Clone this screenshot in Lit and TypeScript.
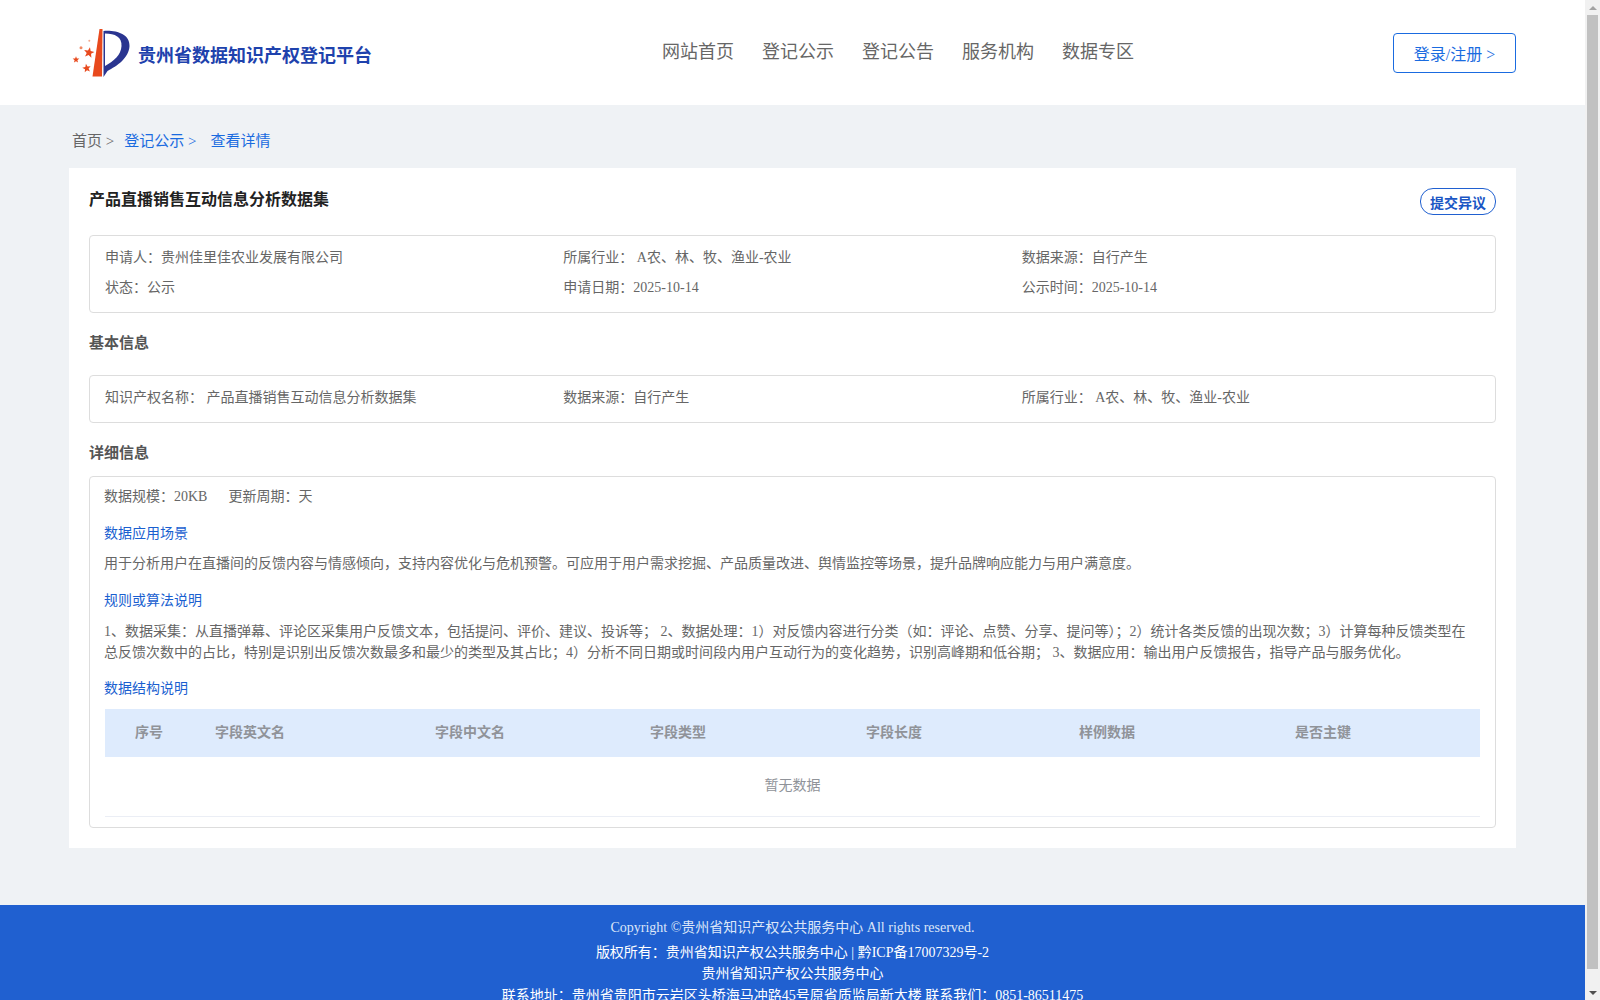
// Detail page of the Guizhou data IP registration platform.
import { LitElement, html, css, svg } from 'lit';
import { customElement } from 'lit/decorators.js';

const NAV = ['网站首页', '登记公示', '登记公告', '服务机构', '数据专区'];
const COLUMNS = ['序号', '字段英文名', '字段中文名', '字段类型', '字段长度', '样例数据', '是否主键'];

function star(cx: number, cy: number, r: number, rot = 0) {
  const pts: string[] = [];
  for (let i = 0; i < 10; i++) {
    const rad = i % 2 ? r * 0.42 : r;
    const a = ((-90 + rot + i * 36) * Math.PI) / 180;
    pts.push(`${(cx + rad * Math.cos(a)).toFixed(2)},${(cy + rad * Math.sin(a)).toFixed(2)}`);
  }
  return svg`<polygon points=${pts.join(' ')} fill="#e8491d" />`;
}

@customElement('app-root')
export class AppRoot extends LitElement {
  static override styles = css`
    :host {
      display: flex;
      height: 100vh;
      font-family: 'Liberation Serif', 'Noto Sans CJK SC', serif;
      font-size: 14px;
      color: #666;
    }
    .page {
      flex: 1;
      min-width: 0;
      height: 100vh;
      overflow: hidden;
      background: #eff2f5;
    }

    /* the window's own scrollbar, headless chrome does not paint one */
    .scrollbar {
      width: 15px;
      flex: none;
      background: #f1f1f1;
      display: flex;
      flex-direction: column;
    }
    .arrow {
      height: 15px;
      flex: none;
      display: flex;
      align-items: center;
      justify-content: center;
    }
    .arrow svg {
      width: 8px;
      height: 4px;
    }
    .thumb {
      height: 954px;
      flex: none;
      margin: 0 2px;
      background: #c1c1c1;
    }
    .rest {
      flex: 1;
    }

    header {
      height: 105px;
      background: #fff;
      display: flex;
      align-items: center;
      padding: 0 69px 0 70px;
    }
    .brand {
      width: 592px;
      display: flex;
      align-items: center;
      gap: 4px;
    }
    .brand svg {
      width: 64px;
      height: 56px;
      flex: none;
    }
    .brand b {
      font-size: 18px;
      color: #1e42ad;
      margin-top: 2px;
    }
    nav {
      flex: 1;
      display: flex;
      gap: 28px;
      font-size: 18px;
      line-height: 24px;
      color: #666;
      margin-top: -2px;
    }
    .login {
      width: 123px;
      height: 40px;
      box-sizing: border-box;
      border: 1px solid #1a6be0;
      border-radius: 4px;
      color: #1a6be0;
      font-size: 16px;
      display: flex;
      align-items: center;
      justify-content: center;
      margin-top: 1px;
    }

    .crumbs {
      padding: 25px 0 16px 72px;
      font-size: 15px;
      line-height: 22px;
    }
    .crumbs a {
      color: #1a6be0;
    }
    .crumbs span {
      margin-right: 10px;
    }
    .crumbs a.cur {
      margin-left: 4px;
    }

    .card {
      margin: 0 69px;
      background: #fff;
      padding: 20px;
    }
    .title-row {
      display: flex;
      justify-content: space-between;
      align-items: flex-start;
      height: 27px;
    }
    h1 {
      margin: 0;
      font-size: 16px;
      line-height: 24px;
      color: #222;
    }
    .object {
      width: 76px;
      height: 27px;
      box-sizing: border-box;
      border: 1px solid #2060d0;
      border-radius: 13px;
      color: #1a56c4;
      font-weight: bold;
      font-size: 14px;
      display: flex;
      align-items: center;
      justify-content: center;
    }
    .box {
      border: 1px solid #ddd;
      border-radius: 4px;
      padding: 0 15px;
    }
    .cols {
      display: grid;
      grid-template-columns: repeat(3, 1fr);
    }
    .summary {
      margin-top: 20px;
      padding-top: 7px;
      padding-bottom: 9px;
      line-height: 30px;
    }
    h2 {
      margin: 0;
      font-size: 15px;
      line-height: 22px;
      color: #555;
    }
    .h-basic {
      margin-top: 19px;
      margin-bottom: 21px;
    }
    .basic {
      padding-top: 11px;
      padding-bottom: 13px;
      line-height: 22px;
    }
    .h-detail {
      margin-top: 19px;
      margin-bottom: 12px;
    }
    .detail {
      padding-top: 9px;
      padding-bottom: 10px;
    }
    .line {
      line-height: 22px;
      margin-left: -1px;
    }
    .line span + span {
      margin-left: 21px;
    }
    h3 {
      margin: 0 0 0 -1px;
      font-size: 14px;
      font-weight: normal;
      line-height: 22px;
      color: #1a5fd0;
    }
    .scene {
      margin-top: 15px;
    }
    .rule {
      margin-top: 16px;
    }
    .struct {
      margin-top: 15px;
    }
    p {
      margin: 9px 1px 0 -1px;
      line-height: 21px;
    }
    .scene + p {
      margin-top: 8px;
    }
    .table {
      margin-top: 9px;
      color: #909399;
    }
    .thead {
      height: 48px;
      background: #deebfd;
      display: grid;
      grid-template-columns: 90px 220px 215px 216px 213px 216px 1fr;
      align-items: center;
      font-weight: bold;
    }
    .thead div {
      padding-left: 20px;
      margin-top: -5px;
    }
    .thead div:first-child {
      padding-left: 30px;
    }
    .empty {
      height: 59px;
      border-bottom: 1px solid #ebeef5;
      display: flex;
      align-items: center;
      justify-content: center;
    }
    .empty span {
      margin-top: -5px;
    }

    footer {
      margin-top: 57px;
      background: #2060d0;
      color: #fff;
      text-align: center;
      padding: 12px 0 11px;
      line-height: 21px;
    }
    .copy {
      color: #dce6f8;
      margin-bottom: 4px;
    }
    .contact {
      margin-top: 1px;
    }
  `;

  private _logo() {
    return svg`<svg viewBox="0 0 64 56">
      <path d="M29.5 4H32.5L32 51.5H22.5Z" fill="#e8491d" />
      <path d="M33.5 6C46 5 60 9 59.5 21C59 33 47 41 37.5 46L33.5 52Z" fill="#2a3590" />
      <path d="M35 8.5C45 8.5 52 12 51.5 21C51 30 44 36 35 41Z" fill="#fff" />
      ${star(19, 27.7, 5.5, 10)}
      ${star(6, 34.7, 3.5)}
      ${star(16.7, 43.3, 4.5, -10)}
      <circle cx="11" cy="22.7" r="1.5" fill="#f08a66" />
      <circle cx="19.3" cy="15.7" r="1" fill="#f4a88c" />
    </svg>`;
  }

  protected override render() {
    return html`
      <div class="page">
        <header>
          <div class="brand">${this._logo()}<b>贵州省数据知识产权登记平台</b></div>
          <nav>${NAV.map((n) => html`<span>${n}</span>`)}</nav>
          <div class="login">登录/注册 &gt;</div>
        </header>

        <div class="crumbs">
          <span>首页 &gt;</span><a><span>登记公示 &gt;</span></a><a class="cur">查看详情</a>
        </div>

        <div class="card">
          <div class="title-row">
            <h1>产品直播销售互动信息分析数据集</h1>
            <div class="object">提交异议</div>
          </div>

          <div class="box cols summary">
            <div>申请人：贵州佳里佳农业发展有限公司</div>
            <div>所属行业： A农、林、牧、渔业-农业</div>
            <div>数据来源：自行产生</div>
            <div>状态：公示</div>
            <div>申请日期：2025-10-14</div>
            <div>公示时间：2025-10-14</div>
          </div>

          <h2 class="h-basic">基本信息</h2>
          <div class="box cols basic">
            <div>知识产权名称： 产品直播销售互动信息分析数据集</div>
            <div>数据来源：自行产生</div>
            <div>所属行业： A农、林、牧、渔业-农业</div>
          </div>

          <h2 class="h-detail">详细信息</h2>
          <div class="box detail">
            <div class="line"><span>数据规模：20KB</span><span>更新周期：天</span></div>
            <h3 class="scene">数据应用场景</h3>
            <p>用于分析用户在直播间的反馈内容与情感倾向，支持内容优化与危机预警。可应用于用户需求挖掘、产品质量改进、舆情监控等场景，提升品牌响应能力与用户满意度。</p>
            <h3 class="rule">规则或算法说明</h3>
            <p>1、数据采集：从直播弹幕、评论区采集用户反馈文本，包括提问、评价、建议、投诉等； 2、数据处理：1）对反馈内容进行分类（如：评论、点赞、分享、提问等）；2）统计各类反馈的出现次数；3）计算每种反馈类型在总反馈次数中的占比，特别是识别出反馈次数最多和最少的类型及其占比；4）分析不同日期或时间段内用户互动行为的变化趋势，识别高峰期和低谷期； 3、数据应用：输出用户反馈报告，指导产品与服务优化。</p>
            <h3 class="struct">数据结构说明</h3>
            <div class="table">
              <div class="thead">${COLUMNS.map((c) => html`<div>${c}</div>`)}</div>
              <div class="empty"><span>暂无数据</span></div>
            </div>
          </div>
        </div>

        <footer>
          <div class="copy">Copyright ©贵州省知识产权公共服务中心 All rights reserved.</div>
          <div>版权所有：贵州省知识产权公共服务中心 | 黔ICP备17007329号-2</div>
          <div>贵州省知识产权公共服务中心</div>
          <div class="contact">联系地址：贵州省贵阳市云岩区头桥海马冲路45号原省质监局新大楼 联系我们：0851-86511475</div>
        </footer>
      </div>
      <div class="scrollbar">
        <div class="arrow"><svg viewBox="0 0 8 4"><path d="M4 0L8 4H0z" fill="#a3a3a3" /></svg></div>
        <div class="thumb"></div>
        <div class="rest"></div>
        <div class="arrow"><svg viewBox="0 0 8 4"><path d="M0 0H8L4 4z" fill="#505050" /></svg></div>
      </div>
    `;
  }
}
